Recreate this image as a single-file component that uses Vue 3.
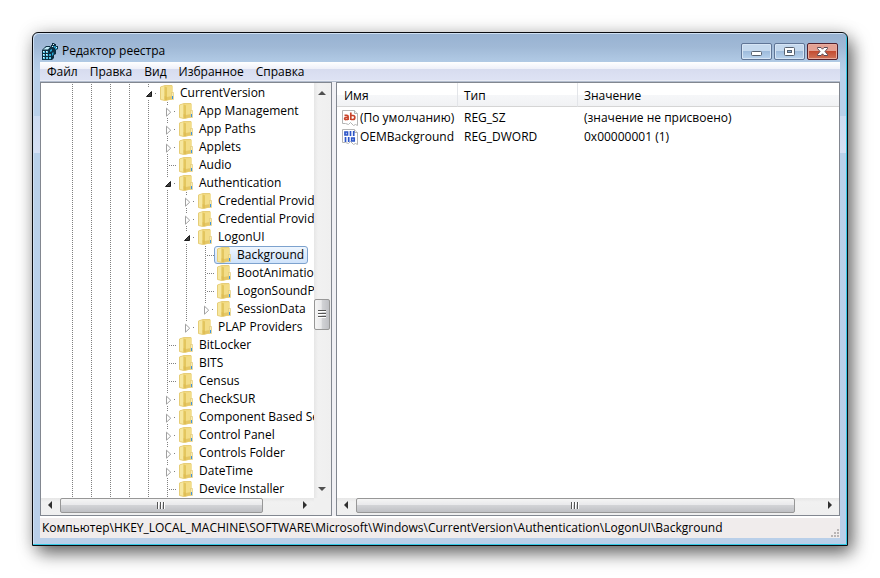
<script setup>
import { ref } from 'vue'

const menus = ['Файл', 'Правка', 'Вид', 'Избранное', 'Справка']

// state: open | closed | leaf; last: no further siblings below
const nodes = [
  { name: 'CurrentVersion', level: 4, state: 'open' },
  { name: 'App Management', level: 5, state: 'closed' },
  { name: 'App Paths', level: 5, state: 'closed' },
  { name: 'Applets', level: 5, state: 'closed' },
  { name: 'Audio', level: 5, state: 'leaf' },
  { name: 'Authentication', level: 5, state: 'open' },
  { name: 'Credential Providers', level: 6, state: 'closed' },
  { name: 'Credential Provider Filters', level: 6, state: 'closed' },
  { name: 'LogonUI', level: 6, state: 'open' },
  { name: 'Background', level: 7, state: 'leaf' },
  { name: 'BootAnimation', level: 7, state: 'leaf' },
  { name: 'LogonSoundPlayed', level: 7, state: 'leaf' },
  { name: 'SessionData', level: 7, state: 'closed', last: true },
  { name: 'PLAP Providers', level: 6, state: 'closed', last: true },
  { name: 'BitLocker', level: 5, state: 'leaf' },
  { name: 'BITS', level: 5, state: 'leaf' },
  { name: 'Census', level: 5, state: 'leaf' },
  { name: 'CheckSUR', level: 5, state: 'closed' },
  { name: 'Component Based Servicing', level: 5, state: 'closed' },
  { name: 'Control Panel', level: 5, state: 'closed' },
  { name: 'Controls Folder', level: 5, state: 'closed' },
  { name: 'DateTime', level: 5, state: 'closed' },
  { name: 'Device Installer', level: 5, state: 'leaf' }
]

const selected = ref('Background')

const values = [
  { name: '(По умолчанию)', type: 'REG_SZ', data: '(значение не присвоено)', kind: 'string' },
  { name: 'OEMBackground', type: 'REG_DWORD', data: '0x00000001 (1)', kind: 'binary' }
]

const path = 'Компьютер\\HKEY_LOCAL_MACHINE\\SOFTWARE\\Microsoft\\Windows\\CurrentVersion\\Authentication\\LogonUI\\Background'

// shares of the track: before the thumb, the thumb, after it
const scroll = {
  tree: [2, 203, 34],
  treeY: [200, 29, 151],
  list: [2, 439, 27]
}
</script>

<template>
  <main class="window">
    <header class="title-bar">
      <svg class="app-icon" width="16" height="17" viewBox="0 0 16 17" aria-hidden="true">
        <path d="M0 7 4 3h4l1 1V2h1V0h2l1 1h1v2h2v3l-2 1v4l-2 1v3l-2 2H0z" fill="#0c2f42" />
        <path d="M1 6.500 4.500 4H8L6 6.500z" fill="#c5f0fb" />
        <path d="M1 8h2v2H1zM4 8h2v2H4zM1 11h2v2H1zM4 11h2v2H4zM1 14h2v2H1zM4 14h2v2H4zM7 14h2v2H7z" fill="#5cc8ea" />
        <path d="M7 11h2v2H7zM10 10l1.500-1v2.500L10 13zM11 3.500l2-.5 1.500 1-2 1zM8 7l2-1v2L8 9zM13 5l2-.5V6l-2 .5z" fill="#2aa9d6" />
        <path d="M1 8h1v1H1zM4 8h1v1H4zM1 11h1v1H1zM4 11h1v1H4zM1 14h1v1H1zM11 1h1v1h-1zM10 3h1v1h-1zM14 4h1v1h-1z" fill="#e4fbff" />
      </svg>
      <h1>Редактор реестра</h1>
      <div class="controls">
        <button type="button" aria-label="Свернуть">
          <svg width="29" height="15" viewBox="0 0 29 15"><rect x="9.500" y="7.500" width="10" height="4" rx="1" fill="#fff" stroke="#56616f" /></svg>
        </button>
        <button type="button" aria-label="Развернуть">
          <svg width="29" height="15" viewBox="0 0 29 15"><rect x="9.500" y="3.500" width="10" height="8" rx="1" fill="#fff" stroke="#56616f" /><rect x="12.500" y="6.500" width="4" height="2" fill="#8db1d8" stroke="#56616f" /></svg>
        </button>
        <button type="button" class="close" aria-label="Закрыть">
          <svg width="29" height="15" viewBox="0 0 29 15"><path d="M9.500 3.500h3.500l1.500 1.700L16 3.500h3.500v1L17 7.500l2.500 3v1H16l-1.500-1.700-1.500 1.700H9.500v-1l2.500-3-2.500-3z" fill="#fff" stroke="#5b4a55" /></svg>
        </button>
      </div>
    </header>

    <nav class="menu-bar">
      <button v-for="m in menus" :key="m" type="button">{{ m }}</button>
    </nav>

    <div class="panes">
      <section class="pane tree-pane" aria-label="Разделы реестра">
        <div class="tree-area">
          <ul class="tree" role="tree">
            <li v-for="n in nodes" :key="n.name" role="treeitem" :aria-selected="n.name === selected">
              <svg v-for="g in n.level" :key="g" class="cell" width="19" height="18" viewBox="0 0 19 18" aria-hidden="true">
                <path class="dots" d="M10.500 0V18" />
              </svg>
              <svg class="cell" width="19" height="18" viewBox="0 0 19 18" aria-hidden="true">
                <template v-if="n.state === 'leaf'">
                  <path class="dots" d="M10.500 0V18M12 9.500H19" />
                </template>
                <template v-else>
                  <path class="dots" d="M10.500 0V4M17 9.500H19" />
                  <path v-if="!n.last" class="dots" d="M10.500 16V18" />
                  <path v-if="n.state === 'open'" d="M13.500 7.500v5h-5z" fill="#404040" stroke="#1c1c1c" />
                  <path v-else d="M9.500 6.200v8l4.200-4z" fill="#fff" stroke="#a0a0a0" />
                </template>
              </svg>
              <button type="button" class="node" :class="{ selected: n.name === selected }" @click="selected = n.name">
                <svg width="14" height="16" viewBox="0 0 14 16" aria-hidden="true">
                  <path d="M.5 2 5 .5h7V14L5 15.500.5 14.500z" fill="#f2da80" stroke="#e6cd78" />
                  <path d="M1 2.300 4.500 1.200v13.600L1 14z" fill="#f6e7a0" />
                  <path d="M4.500 1.200 7 2.500v12.800l-2.500-.5z" fill="#e3c65f" />
                  <path d="M7 2.500 12.500 1v13L7 15.300z" fill="#f3dd88" />
                  <path d="M4.500 11 7 12l5-1v3l-5 1.300-2.500-.5z" fill="#dcb94f" opacity=".6" />
                  <path d="M11.500 7.500h2v7h-2z" fill="#f7e9b0" stroke="#ddc46f" stroke-width=".6" />
                  <path d="M12 11h1v3h-1z" fill="#3c94e0" />
                </svg>
                <span>{{ n.name }}</span>
              </button>
            </li>
          </ul>
          <div class="bar vertical">
            <button type="button" class="arrow" aria-label="Вверх"><svg width="17" height="17" viewBox="0 0 17 17"><path d="M4 12 8 8l4 4z" fill="#505050" /></svg></button>
            <div class="track">
              <i :style="{ flexGrow: scroll.treeY[0] }"></i>
              <div class="thumb" :style="{ flexGrow: scroll.treeY[1] }"><svg width="8" height="9" viewBox="0 0 8 9"><path d="M0 .5h8M0 3.500h8M0 6.500h8" stroke="#555" /><path d="M0 1.500h8M0 4.500h8M0 7.500h8" stroke="#fff" /></svg></div>
              <i :style="{ flexGrow: scroll.treeY[2] }"></i>
            </div>
            <button type="button" class="arrow" aria-label="Вниз"><svg width="17" height="17" viewBox="0 0 17 17"><path d="M4 6h8l-4 4z" fill="#505050" /></svg></button>
          </div>
        </div>
        <div class="bottom">
          <div class="bar">
            <button type="button" class="arrow" aria-label="Влево"><svg width="17" height="15" viewBox="0 0 17 15"><path d="M11 3v8L7 7z" fill="#303030" /></svg></button>
            <div class="track">
              <i :style="{ flexGrow: scroll.tree[0] }"></i>
              <div class="thumb" :style="{ flexGrow: scroll.tree[1] }"><svg width="9" height="7" viewBox="0 0 9 7"><path d="M.5 0v7M3.500 0v7M6.500 0v7" stroke="#555" /><path d="M1.500 0v7M4.500 0v7M7.500 0v7" stroke="#fff" /></svg></div>
              <i :style="{ flexGrow: scroll.tree[2] }"></i>
            </div>
            <button type="button" class="arrow" aria-label="Вправо"><svg width="17" height="15" viewBox="0 0 17 15"><path d="M6 3v8l4-4z" fill="#303030" /></svg></button>
          </div>
          <div class="corner"></div>
        </div>
      </section>

      <section class="pane list-pane" aria-label="Параметры">
        <div class="list-area">
          <table>
            <colgroup><col class="col-name"><col class="col-type"><col></colgroup>
            <thead>
              <tr><th scope="col">Имя</th><th scope="col">Тип</th><th scope="col">Значение</th></tr>
            </thead>
            <tbody>
              <tr v-for="v in values" :key="v.name">
                <td class="name">
                  <div>
                    <svg width="16" height="16" viewBox="0 0 16 16" aria-hidden="true">
                      <path d="M.5.500h12l3 3v12l-2-1-2 1-3-3-2 2-3-1-3 0z" fill="#fff" stroke="#b4b4b4" />
                      <path d="M12.500.500v3h3" fill="#eee" stroke="#b4b4b4" />
                      <g v-if="v.kind === 'string'" fill="none" stroke="#c8432a" stroke-width="1.700">
                        <path d="M2.500 5.300h2.300q1.300 0 1.300 1.200V10M6 7.500H4q-1.400 0-1.400 1.100T4 9.500h2M8.800 2.500V10M9 5.500h2q1.800 0 1.800 2t-1.800 2H9" />
                      </g>
                      <g v-else fill="none" stroke="#2c55c8" stroke-width="1.700">
                        <path d="M3 3h2.500v3H3zM8.500 2v5M11.700 2v5M3.500 8v5M6.700 8v5M9.700 9h2.500v3H9.700z" />
                      </g>
                    </svg>
                    <span>{{ v.name }}</span>
                  </div>
                </td>
                <td>{{ v.type }}</td>
                <td>{{ v.data }}</td>
              </tr>
            </tbody>
          </table>
        </div>
        <div class="bar">
          <button type="button" class="arrow" aria-label="Влево"><svg width="17" height="15" viewBox="0 0 17 15"><path d="M11 3v8L7 7z" fill="#303030" /></svg></button>
          <div class="track">
            <i :style="{ flexGrow: scroll.list[0] }"></i>
            <div class="thumb" :style="{ flexGrow: scroll.list[1] }"><svg width="9" height="7" viewBox="0 0 9 7"><path d="M.5 0v7M3.500 0v7M6.500 0v7" stroke="#555" /><path d="M1.500 0v7M4.500 0v7M7.500 0v7" stroke="#fff" /></svg></div>
            <i :style="{ flexGrow: scroll.list[2] }"></i>
          </div>
          <button type="button" class="arrow" aria-label="Вправо"><svg width="17" height="15" viewBox="0 0 17 15"><path d="M6 3v8l4-4z" fill="#303030" /></svg></button>
        </div>
      </section>
    </div>

    <footer class="status">
      <span>{{ path }}</span>
      <svg width="8" height="8" viewBox="0 0 8 8" aria-hidden="true">
        <path d="M6 0h2v2H6zM3 3h2v2H3zM6 3h2v2H6zM0 6h2v2H0zM3 6h2v2H3zM6 6h2v2H6z" fill="#b9b5b5" />
      </svg>
    </footer>
  </main>
</template>

<style>
body {
  background: #fff;
}
</style>

<style scoped>
.window {
  box-sizing: border-box;
  display: flex;
  flex-direction: column;
  min-height: calc(100vh - 64px);
  margin: 32px;
  padding: 0 7px 7px;
  border: 1px solid #0a0c10;
  border-radius: 6px 6px 0 0;
  background: linear-gradient(#97b2d1 0, #a0b9d6 14px, #b0c9e4 28px, #b9d1ea 40px, #b9d1ea 83px, #cddcf1 83px, #d6e0f4 120px, #b9d1ea 120px, #b9cfe9 100%);
  box-shadow: inset -1px -1px #33c8e4, inset 1px 1px #cfe0f2, 5px 8px 18px -1px rgba(0, 0, 0, 0.6), 0 0 18px rgba(0, 0, 0, 0.15);
  color: #000;
  font: 12px/18px "Open Sans", "Noto Sans", sans-serif;
}
button {
  margin: 0;
  padding: 0;
  border: 0;
  background: none;
  color: inherit;
  font: inherit;
  text-align: left;
}
svg {
  display: block;
  flex: none;
}
.title-bar {
  display: flex;
  align-items: center;
  height: 22px;
  padding: 7px 2px 0;
}
h1 {
  flex: 1;
  margin: 0 0 0 4px;
  font-size: 12px;
  font-weight: 400;
}
.controls {
  display: flex;
  gap: 2px;
}
.controls button {
  border: 1px solid #5f7596;
  border-radius: 2px;
  background: linear-gradient(#c5d9ee 0 45%, #9bb9da 45%, #b9d3ee);
  box-shadow: inset 0 0 0 1px #d6e5f5;
}
.controls .close {
  border-color: #53202c;
  background: linear-gradient(#e4a193 0 45%, #c2482e 45%, #d0745a);
  box-shadow: inset 0 0 0 1px #e8ac9e;
}
.menu-bar {
  display: flex;
  padding: 0 1px;
  border-bottom: 1px solid #b2bccd;
  background: linear-gradient(#fff, #eef0f9 7px, #d7dcef 7px, #dee3f4);
  box-shadow: inset 0 -1px #e8ebf5;
}
.menu-bar button {
  padding: 0 6px;
  line-height: 19px;
}
.panes {
  display: flex;
  flex: 1;
  gap: 4px;
  background: #f0f0f4;
}
.pane {
  display: flex;
  flex-direction: column;
  box-sizing: border-box;
  min-width: 0;
  border: 1px solid #828790;
  background: #fff;
}
.tree-pane {
  flex: 0 0 292px;
}
.list-pane {
  flex: 1;
}
.tree-area {
  display: flex;
  flex: 1 0 414px;
  height: 414px;
}
.tree {
  flex: 1;
  min-width: 0;
  margin: 0;
  padding: 1px 0 0 21px;
  overflow: hidden;
  list-style: none;
}
.tree li {
  display: flex;
  height: 18px;
}
.dots {
  fill: none;
  stroke: #808080;
  stroke-dasharray: 1 1;
  shape-rendering: crispEdges;
}
.node {
  display: flex;
  align-items: center;
  gap: 6px;
  box-sizing: border-box;
  height: 18px;
  padding: 0 3px 0 2px;
  border: 1px solid transparent;
  border-radius: 3px;
  line-height: 16px;
  white-space: nowrap;
}
.selected {
  border-color: #7da2ce;
  background: linear-gradient(#eff6fe, #cfe3fb);
}
.bar {
  display: flex;
  flex: 0 0 auto;
  box-sizing: border-box;
  min-width: 0;
  height: 17px;
  padding-bottom: 2px;
  background: linear-gradient(#e6e6e6, #f1f1f1 4px, #efefef);
}
.track {
  display: flex;
  flex: 1;
}
.track i {
  flex: 0 0 0;
}
.thumb {
  display: flex;
  flex: 0 0 0;
  align-items: center;
  justify-content: center;
  box-sizing: border-box;
  border: 1px solid #979797;
  border-radius: 2px;
  background: linear-gradient(#f5f5f5, #e9e9eb 45%, #d2d3d6 50%, #bfc0c4);
}
.vertical {
  flex-direction: column;
  height: auto;
  padding: 0;
  background: linear-gradient(90deg, #e6e6e6, #f1f1f1 4px, #efefef);
}
.vertical .track {
  flex-direction: column;
}
.vertical .thumb {
  margin: 0 1px 0 0;
  background: linear-gradient(90deg, #f5f5f5, #e9e9eb 45%, #d2d3d6 50%, #bfc0c4);
}
.bottom {
  display: flex;
}
.bottom .bar {
  flex: 1;
}
.corner {
  width: 17px;
  background: #f0f0f0;
}
.list-area {
  flex: 1;
}
table {
  width: 100%;
  border-collapse: separate;
  border-spacing: 0;
  table-layout: fixed;
}
.col-name {
  width: 121px;
}
.col-type {
  width: 120px;
}
th {
  box-sizing: border-box;
  height: 24px;
  padding: 2px 6px 0;
  border-right: 1px solid #e3e5e9;
  border-bottom: 1px solid #d5d5d5;
  background: linear-gradient(#fff 50%, #f6f7f9 50%, #f1f2f4);
  font-weight: 400;
  text-align: left;
}
th:first-child {
  padding-left: 7px;
}
th:last-child {
  border-right: 0;
}
td {
  height: 19px;
  padding: 0 6px;
  white-space: nowrap;
}
td:first-child {
  padding: 0 0 0 5px;
}
tbody::before {
  content: "";
  display: block;
  height: 1px;
}
.name div {
  display: flex;
  align-items: center;
  gap: 2px;
}
.status {
  display: flex;
  align-items: flex-end;
  justify-content: space-between;
  padding: 1px 1px 1px 2px;
  border-top: 2px solid #fff;
  background: #f0ecec;
}
.status span {
  white-space: nowrap;
}
</style>
